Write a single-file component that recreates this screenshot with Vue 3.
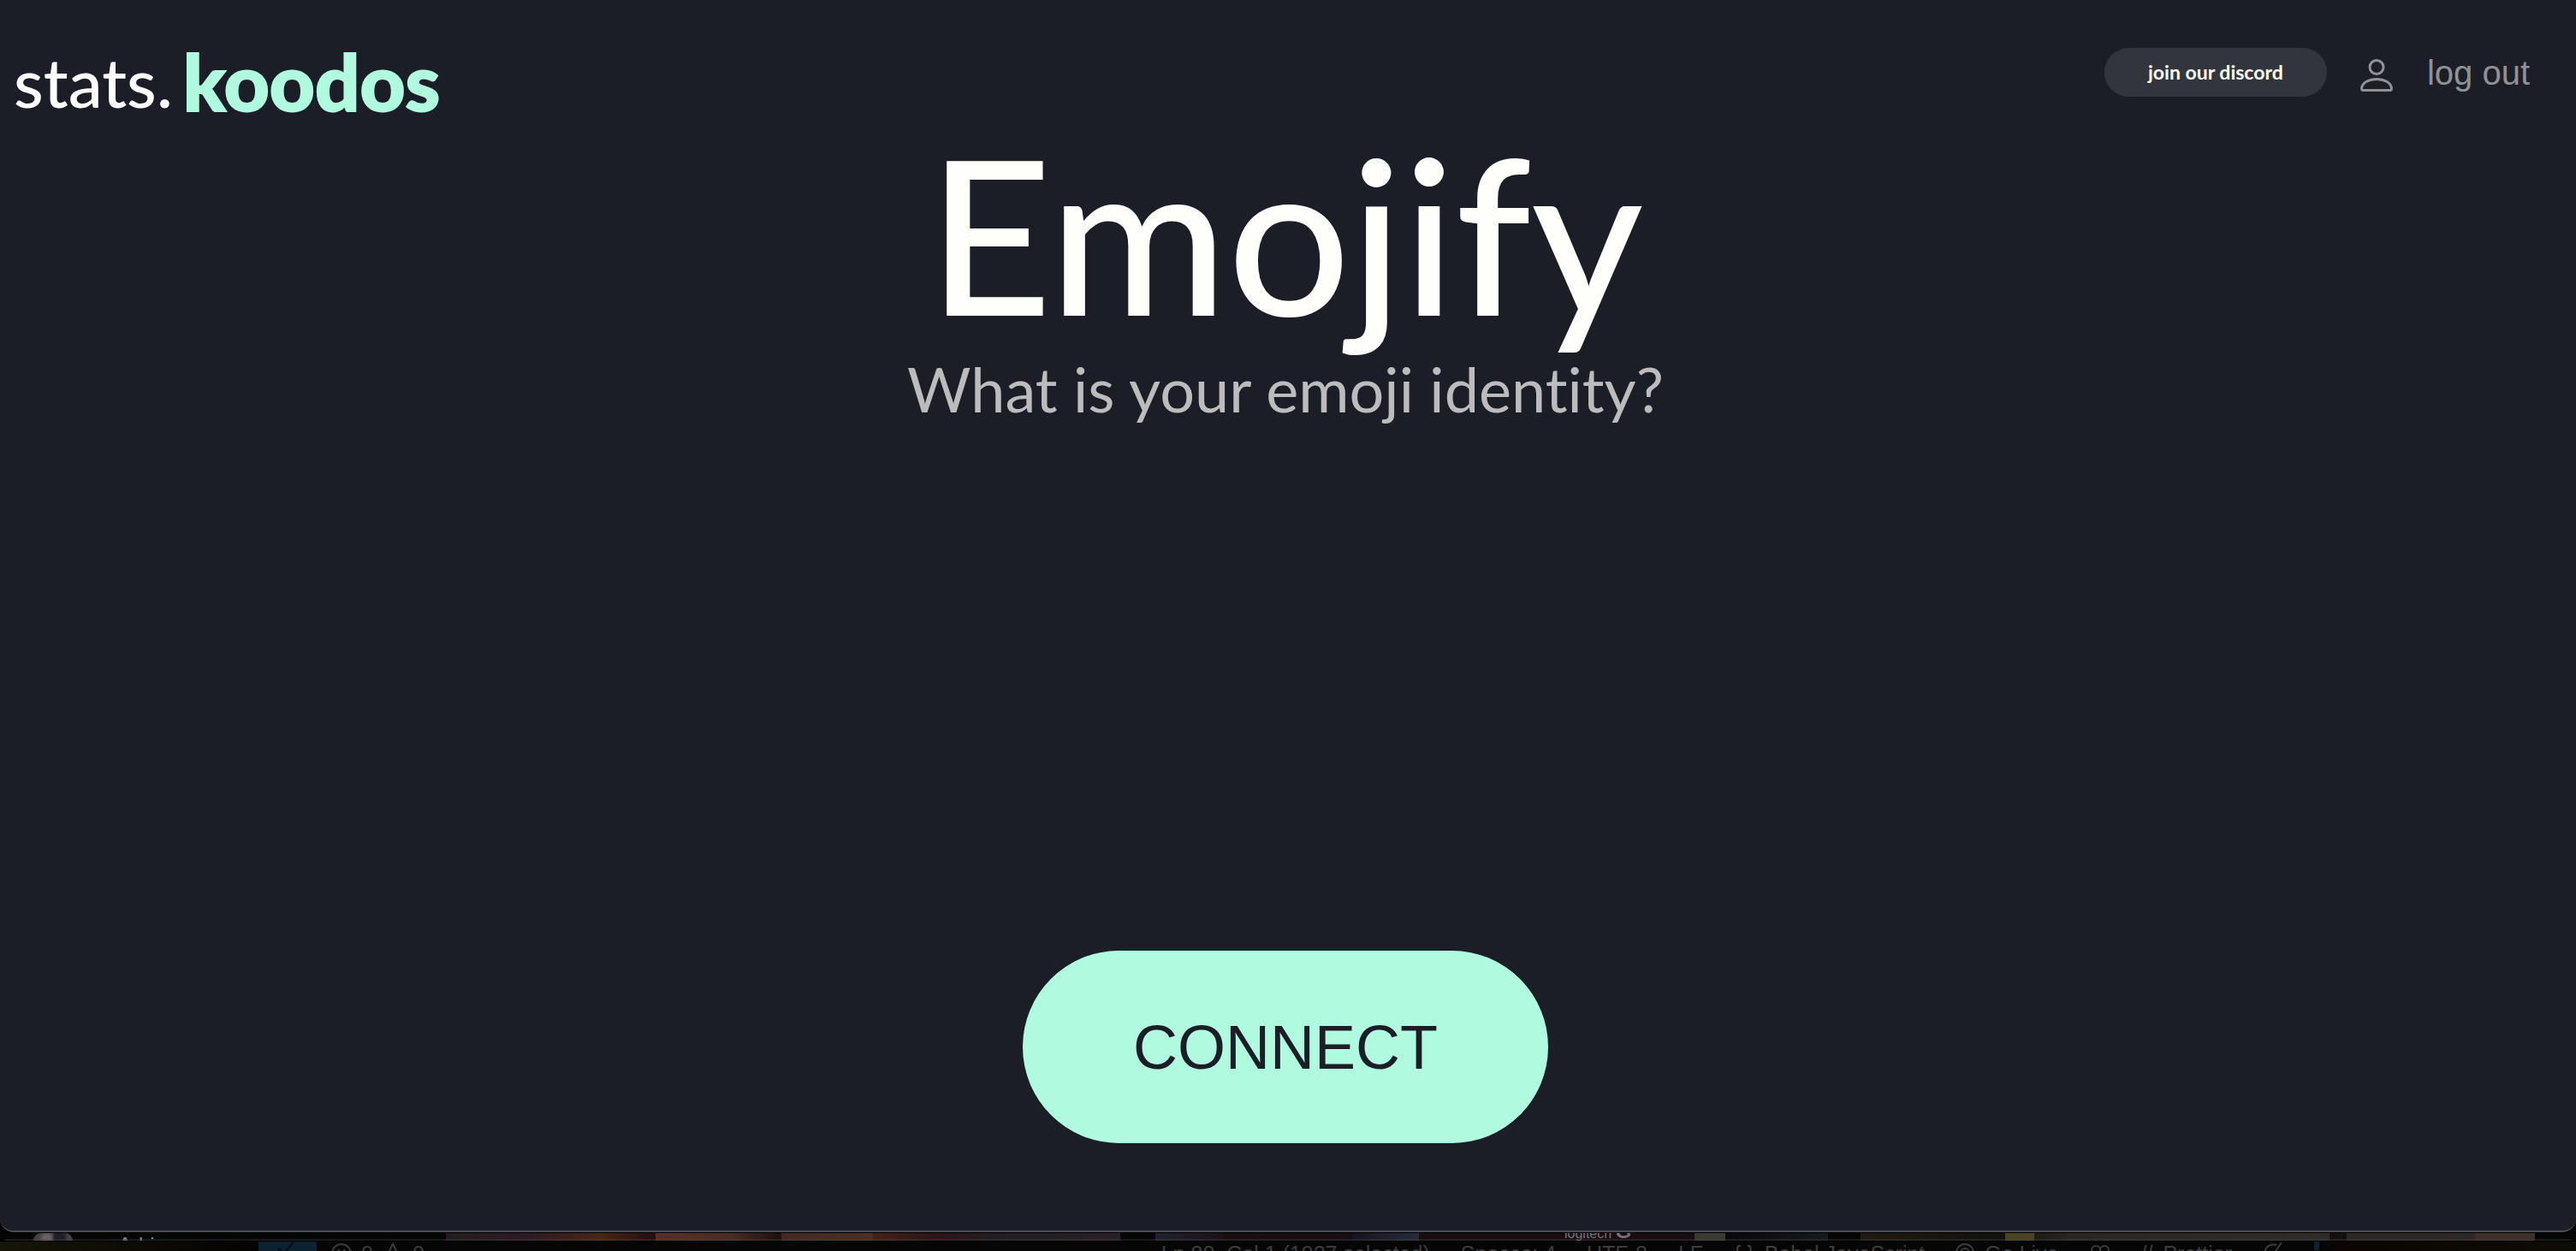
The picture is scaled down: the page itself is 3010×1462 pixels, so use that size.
<script setup>
const strip = [
  { x: 0, w: 39, c: '#060606' },
  { x: 39, w: 46, c: 'radial-gradient(circle at 34% 70%,#6b6264 0 12%,transparent 30%),radial-gradient(circle at 66% 60%,#1e1e26 0 18%,transparent 34%),#4a3f43', round: true },
  { x: 85, w: 436, c: '#060606', name: 'Adri' },
  { x: 521, w: 180, c: 'linear-gradient(90deg,#241c22,#2d1a24 55%,#4a2512)' },
  { x: 701, w: 65, c: 'linear-gradient(90deg,#4a2512,#240d10)' },
  { x: 766, w: 147, c: 'linear-gradient(90deg,#5a2f25,#4c2b22 60%,#1c100e)' },
  { x: 913, w: 107, c: 'linear-gradient(90deg,#45291f,#4a3022)' },
  { x: 1020, w: 289, c: 'linear-gradient(90deg,#432312,#2e1318 25%,#221d24 50%,#2a1e28)' },
  { x: 1309, w: 41, c: '#060606' },
  { x: 1350, w: 80, c: 'linear-gradient(90deg,#1f2230,#1b1019)' },
  { x: 1430, w: 150, c: '#190d14' },
  { x: 1580, w: 78, c: 'linear-gradient(90deg,#1a1220,#242c3c)' },
  { x: 1658, w: 322, c: '#190d14', brand: true },
  { x: 1980, w: 36, c: '#3a3a30' },
  { x: 2016, w: 120, c: 'linear-gradient(90deg,#07090c,#15191c)' },
  { x: 2136, w: 38, c: '#060606' },
  { x: 2174, w: 169, c: 'linear-gradient(90deg,#211a11,#12100b)' },
  { x: 2343, w: 34, c: '#4b4322' },
  { x: 2377, w: 345, c: 'linear-gradient(90deg,#1d1a17,#2a2622 12%,#2f2c2a)' },
  { x: 2722, w: 20, c: '#13110f' },
  { x: 2742, w: 150, c: '#2c2825' },
  { x: 2892, w: 70, c: '#3e3029' },
  { x: 2962, w: 48, c: '#060606' }
]
</script>

<template>
  <div class="page">
    <div class="window">
      <header class="bar">
        <a class="logo" href="#"><span class="stats">stats.</span><span class="koodos">koodos</span></a>
        <nav class="nav">
          <button class="discord" type="button">join our discord</button>
          <svg class="user" viewBox="0 0 38 38" fill="none" stroke="#909194" stroke-width="3" aria-hidden="true">
            <circle cx="19" cy="9.5" r="8" />
            <path d="M3 36.5Q1.5 36.5 1.5 34C2.500 27.500 10 23.500 19 23.500S35.500 27.500 36.500 34Q36.500 36.500 35 36.500Z" />
          </svg>
          <a class="logout" href="#">log out</a>
        </nav>
      </header>
      <main class="main">
        <h1>Emojify</h1>
        <p>What is your emoji identity?</p>
        <button class="connect" type="button">CONNECT</button>
      </main>
    </div>
    <div class="behind">
      <div v-for="s in strip" :key="s.x" class="piece" :class="{ round: s.round }" :style="{ flexGrow: s.w, background: s.c }">
        <span v-if="s.name" class="name">{{ s.name }}</span>
        <span v-if="s.brand" class="brand">logitech <b>G</b></span>
      </div>
    </div>
    <footer class="status">
      <div class="group left">
        <span class="remote">
          <svg width="30" height="30" viewBox="0 0 30 30"><path d="M4 8l9 8M22 1L12 12l8 8" /></svg>
        </span>
        <svg width="24" height="30" viewBox="0 0 24 30"><circle cx="12" cy="14" r="11" /><path d="M8 9l8 9M16 9l-8 9" /></svg>
        <span>0</span>
        <svg width="24" height="30" viewBox="0 0 24 30"><path d="M12 3L1 24H23ZM12 11v7" /></svg>
        <span>0</span>
      </div>
      <div class="group right">
        <span>Ln 80, Col 1 (1927 selected)</span>
        <span>Spaces: 4</span>
        <span>UTF-8</span>
        <span>LF</span>
        <span class="pair"><span>{ }</span><span>Babel JavaScript</span></span>
        <span class="pair">
          <svg width="22" height="30" viewBox="0 0 22 30"><circle cx="11" cy="13" r="10" /><circle cx="11" cy="13" r="5" /></svg>
          <span>Go Live</span>
        </span>
        <svg width="24" height="30" viewBox="0 0 24 30"><circle cx="7" cy="10" r="5" /><circle cx="17" cy="10" r="5" /></svg>
        <span class="pair"><span>//</span><span>Prettier</span></span>
        <svg width="24" height="30" viewBox="0 0 24 30"><path d="M16 4C6 2 2 8 2 16M22 1L10 18" /></svg>
        <span class="marker"></span>
      </div>
    </footer>
  </div>
</template>

<style>
body { margin: 0; background: #000; }
</style>
<style scoped>
.page { height: 100vh; display: flex; flex-direction: column; overflow: hidden; background: #060606; font-family: Lato, sans-serif; font-variant-ligatures: none; }
.window { flex: 1; box-sizing: border-box; display: flex; flex-direction: column; background: #1c1e27; border-bottom: 2px solid #4c4e52; border-radius: 0 0 16px 16px; }
.bar { height: 152px; display: flex; justify-content: space-between; align-items: flex-start; padding: 0 54px 0 16px; }
.logo { display: flex; gap: 12px; padding-top: 46px; color: #fff; text-decoration: none; line-height: 98px; }
.stats { font-size: 80px; font-weight: 500; }
.koodos { font-size: 92px; font-weight: 900; color: #b0fbe0; -webkit-text-stroke: 2px #b0fbe0; }
.nav { display: flex; align-items: flex-start; padding-top: 56px; }
.discord { width: 260px; height: 57px; padding: 0 0 2px; border: 0; border-radius: 29px; background: #33353d; color: #fefffa; font: 700 23px Lato, sans-serif; }
.user { width: 38px; height: 38px; margin: 13px 40px 0 39px; }
.logout { font: 40px/58px "Liberation Sans", sans-serif; color: #909194; text-decoration: none; }
.main { flex: 1; display: flex; flex-direction: column; align-items: center; padding-right: 6px; }
h1 { margin: 0; font-size: 252px; font-weight: 500; line-height: 240px; color: #fefffa; }
p { margin: 0; font-size: 72px; line-height: 124px; color: #bbbcbb; }
.connect { margin: auto 0 102px; width: 614px; height: 225px; border: 0; border-radius: 113px; background: #b0fbe0; color: #1c1e27; font: 72px "Liberation Sans", sans-serif; }
.behind { position: relative; box-sizing: border-box; height: 10px; display: flex; border-top: 1px solid #000; border-radius: 0 0 14px 14px; overflow: hidden; }
.behind::after { content: ""; position: absolute; inset: auto 0 0; height: 2px; background: rgba(70, 70, 70, 0.35); }
.piece { flex-basis: 0; min-width: 0; height: 9px; overflow: hidden; display: flex; }
.round { border-radius: 14px 14px 0 0; }
.name { margin-left: 53px; color: #888; font: 24px/28px "Liberation Sans", sans-serif; }
.brand { align-self: flex-end; margin-left: 170px; color: #777078; font: 16px/17px "Liberation Sans", sans-serif; white-space: nowrap; }
.brand b { font-size: 24px; line-height: 17px; }
.status { box-sizing: border-box; height: 12px; overflow: hidden; display: flex; justify-content: space-between; padding: 0 282px 0 302px; border-top: 1px solid #000; background: linear-gradient(90deg, #171408, #050301 302px, #060606 302px, #060606 2728px, #0c0502 2728px, #0d0c04); color: #3c3c3c; font: 25px/28px "Liberation Sans", sans-serif; white-space: nowrap; }
.status svg { fill: none; stroke: #3c3c3c; stroke-width: 2; }
.group { display: flex; align-items: flex-start; }
.left { gap: 11px; }
.remote { width: 68px; height: 30px; margin-right: 6px; display: flex; justify-content: center; background: #0d2231; }
.status .remote svg { stroke: #050a10; }
.right { gap: 36px; }
.pair { display: flex; gap: 12px; }
.marker { width: 6px; height: 10px; margin-right: 18px; background: #0d2231; }
</style>
